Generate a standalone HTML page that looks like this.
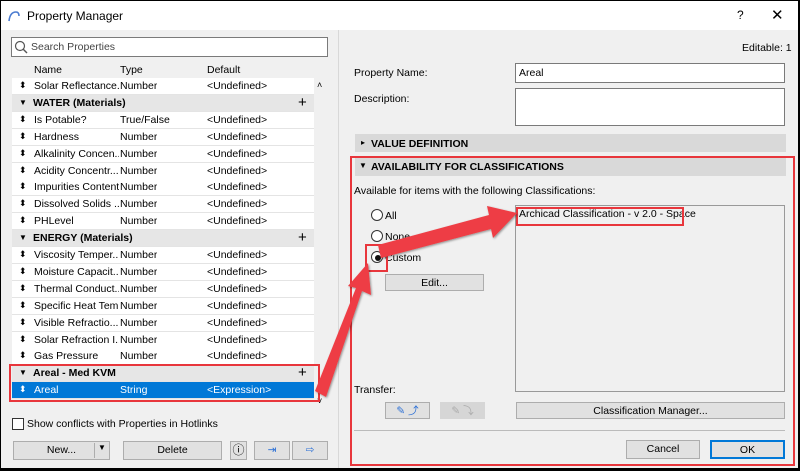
<!DOCTYPE html>
<html><head><meta charset="utf-8"><style>
*{box-sizing:border-box;margin:0;padding:0}
body{width:800px;height:470px;overflow:hidden;background:#000;font-family:"Liberation Sans",sans-serif;font-size:10.5px;color:#000;position:relative}
.win{position:absolute;left:1px;top:1px;width:797px;height:467px;background:#f0f0f0}
.title{position:absolute;left:0;top:0;width:797px;height:29px;background:#fff}
.abs{position:absolute;white-space:nowrap}
.row{position:absolute;left:11px;width:302px;height:17px;background:#fff;border-bottom:1px solid #e4e4e4}
.row span{position:absolute;top:2px;white-space:nowrap;overflow:hidden}
.grp{background:#e6e6e6;font-weight:bold}
.btn{position:absolute;background:#e1e1e1;border:1px solid #adadad;text-align:center;line-height:17px}
.inp{position:absolute;background:#fff;border:1px solid #7a7a7a}
.red{position:absolute;border:2px solid #e8363c}
.radio{position:absolute;width:12px;height:12px;border:1px solid #333;border-radius:50%;background:#fff}
</style></head><body>
<div class="win">
<div class="title"></div>
<svg class="abs" style="left:6px;top:9px" width="14" height="12"><path d="M2 11 Q3 2 9 2 Q12 2 12 6" fill="none" stroke="#4a7bd0" stroke-width="1.6"/></svg>
<div class="abs" style="left:26px;top:8px;font-size:12px">Property Manager</div>
<div class="abs" style="left:736px;top:7px;font-size:12px">?</div>
<div class="abs" style="left:770px;top:5px;font-size:15px">✕</div>
<div class="inp" style="left:10px;top:36px;width:317px;height:20px"></div>
<svg class="abs" style="left:13px;top:39px" width="14" height="14"><circle cx="6" cy="6" r="4.5" fill="none" stroke="#555" stroke-width="1.2"/><path d="M9 9 L13 13" stroke="#555" stroke-width="1.4"/></svg>
<div class="abs" style="left:30px;top:40px;color:#444">Search Properties</div>
<div class="abs" style="left:11px;top:60px;width:302px;height:17px;background:#f0f0f0"></div>
<div class="abs" style="left:33px;top:63px">Name</div>
<div class="abs" style="left:119px;top:63px">Type</div>
<div class="abs" style="left:206px;top:63px">Default</div>
<div class="abs" style="left:313px;top:77px;width:14px;height:320px;background:#f0f0f0"></div>
<div class="abs" style="left:316px;top:79px;font-size:9px">˄</div>
<div class="abs" style="left:316px;top:395px;font-size:9px">˅</div>
<div id="rows"></div>
<div class="abs" style="left:11px;top:417px;width:12px;height:12px;border:1px solid #333;background:#fff"></div>
<div class="abs" style="left:26px;top:417px">Show conflicts with Properties in Hotlinks</div>
<div class="btn" style="left:12px;top:440px;width:97px;height:19px">New...</div>
<div class="abs" style="left:93px;top:442px;width:1px;height:15px;background:#adadad"></div>
<div class="abs" style="left:97px;top:442px;font-size:8px">▼</div>
<div class="btn" style="left:122px;top:440px;width:99px;height:19px">Delete</div>
<div class="btn" style="left:229px;top:440px;width:17px;height:19px;font-size:12px">ⓘ</div>
<div class="btn" style="left:253px;top:440px;width:36px;height:19px;color:#2a6fd6">⇥</div>
<div class="btn" style="left:291px;top:440px;width:36px;height:19px;color:#2a6fd6">⇨</div>
<div class="abs" style="left:337px;top:29px;width:1px;height:438px;background:#d8d8d8"></div>
<div class="abs" style="left:741px;top:41px">Editable: 1</div>
<div class="abs" style="left:353px;top:66px">Property Name:</div>
<div class="inp" style="left:514px;top:62px;width:270px;height:20px"></div>
<div class="abs" style="left:518px;top:66px">Areal</div>
<div class="abs" style="left:353px;top:92px">Description:</div>
<div class="inp" style="left:514px;top:87px;width:270px;height:38px"></div>
<div class="abs" style="left:354px;top:133px;width:431px;height:18px;background:#d9d9d9"></div>
<div class="abs" style="left:360px;top:137px;font-size:8px">▸</div>
<div class="abs" style="left:370px;top:137px;font-weight:bold">VALUE DEFINITION</div>
<div class="abs" style="left:354px;top:157px;width:431px;height:18px;background:#d9d9d9"></div>
<div class="abs" style="left:358px;top:160px;font-size:8px">▼</div>
<div class="abs" style="left:370px;top:160px;font-weight:bold">AVAILABILITY FOR CLASSIFICATIONS</div>
<div class="abs" style="left:353px;top:184px">Available for items with the following Classifications:</div>
<div class="radio" style="left:370px;top:208px"></div><div class="abs" style="left:384px;top:209px">All</div>
<div class="radio" style="left:370px;top:229px"></div><div class="abs" style="left:384px;top:230px">None</div>
<div class="radio" style="left:370px;top:250px"></div><div class="abs" style="left:374px;top:254px;width:6px;height:6px;border-radius:50%;background:#111"></div><div class="abs" style="left:384px;top:251px">Custom</div>
<div class="btn" style="left:384px;top:273px;width:99px;height:17px">Edit...</div>
<div class="inp" style="left:514px;top:204px;width:270px;height:187px;background:#f0f0f0;border-color:#999"></div>
<div class="abs" style="left:518px;top:207px">Archicad Classification - v 2.0 - Space</div>
<div class="abs" style="left:353px;top:383px">Transfer:</div>
<div class="btn" style="left:384px;top:401px;width:45px;height:17px;color:#2a6fd6">✎ ⤴</div>
<div class="btn" style="left:439px;top:401px;width:45px;height:17px;color:#aaa;background:#d6d6d6;border-color:#d6d6d6">✎ ⤵</div>
<div class="btn" style="left:515px;top:401px;width:269px;height:17px">Classification Manager...</div>
<div class="abs" style="left:353px;top:429px;width:431px;height:1px;background:#bbb"></div>
<div class="btn" style="left:625px;top:439px;width:74px;height:19px">Cancel</div>
<div class="btn" style="left:709px;top:439px;width:75px;height:19px;border:2px solid #0078d7">OK</div>
<div class="red" style="left:349px;top:155px;width:445px;height:310px"></div>
<div class="red" style="left:8px;top:363px;width:311px;height:38px"></div>
<div class="red" style="left:364px;top:243px;width:23px;height:28px"></div>
<div class="red" style="left:515px;top:206px;width:168px;height:19px"></div>
<svg class="abs" style="left:0;top:0" width="800" height="470">
<defs><filter id="s"><feDropShadow dx="1" dy="1" stdDeviation="1" flood-opacity="0.4"/></filter></defs>
<g fill="#ee3e44" filter="url(#s)">
<polygon points="314,390 325,396 361,290 370,294 367,262 347,285 355,287"/>
<polygon points="377,244 380,257 490,228 492,237 516,212 486,205 488,214"/>
</g></svg>
</div>
<script>
var R=[["Solar Reflectance...","Number","<Undefined>"],["WATER (Materials)"],["Is Potable?","True/False","<Undefined>"],["Hardness","Number","<Undefined>"],["Alkalinity Concen...","Number","<Undefined>"],["Acidity Concentr...","Number","<Undefined>"],["Impurities Content","Number","<Undefined>"],["Dissolved Solids ...","Number","<Undefined>"],["PHLevel","Number","<Undefined>"],["ENERGY (Materials)"],["Viscosity Temper...","Number","<Undefined>"],["Moisture Capacit...","Number","<Undefined>"],["Thermal Conduct...","Number","<Undefined>"],["Specific Heat Tem...","Number","<Undefined>"],["Visible Refractio...","Number","<Undefined>"],["Solar Refraction I...","Number","<Undefined>"],["Gas Pressure","Number","<Undefined>"],["Areal - Med KVM"],["Areal","String","<Expression>"]];
var h="";R.forEach(function(r,i){var t=77+i*16.9;
if(r.length==1)h+='<div class="row grp" style="top:'+t+'px"><span style="left:7px;font-size:8px;top:3px">▼</span><span style="left:21px">'+r[0]+'</span><span style="left:286px;font-size:15px;top:-1px;font-weight:normal">+</span></div>';
else{var sel=r[0]=="Areal";h+='<div class="row" style="top:'+t+'px;'+(sel?'background:#0078d7;color:#fff':'')+'"><span style="left:7px;font-size:9px">⬍</span><span style="left:22px;width:85px">'+r[0]+'</span><span style="left:108px">'+r[1]+'</span><span style="left:195px">'+r[2].replace(/</g,"&lt;")+'</span></div>';}});
document.getElementById("rows").innerHTML=h;
</script>
</body></html>
